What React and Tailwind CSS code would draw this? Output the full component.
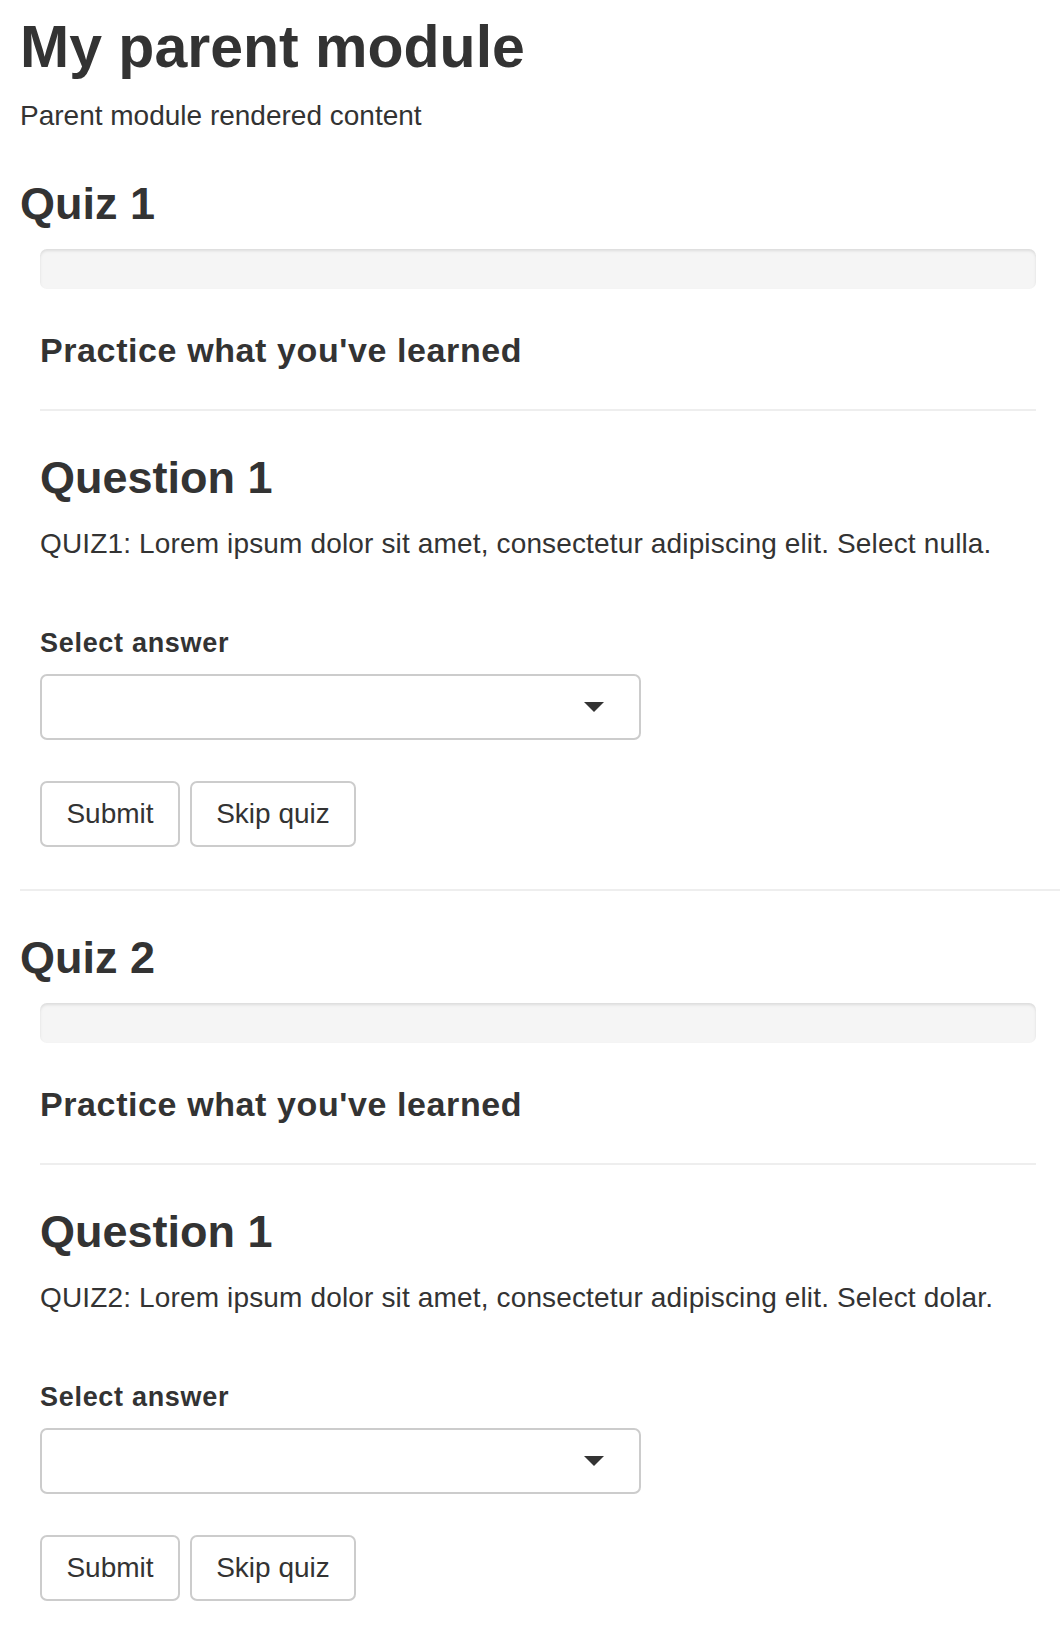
import React from "react";

function Quiz({ title, text, first }) {
  return (
    <section className={first ? "" : "border-t-2 border-[#eeeeee]"}>
      <h2 className={`${first ? "mt-[43px] mb-[1px]" : "mt-[42px] mb-[2px]"} text-[45px] leading-[50px] font-bold`}>{title}</h2>
      <div className="pl-[20px] pr-[24px]">
        <div className="mt-[20px] h-[40px] rounded-[7px] bg-[#f5f5f5] shadow-[inset_0_2px_3px_rgba(0,0,0,0.1)]" />
        <h4 className="mt-[41px] text-[34px] leading-[40px] font-bold tracking-[0.6px]">Practice what you've learned</h4>
        <hr className="mt-[39px] border-0 border-t-2 border-[#eeeeee]" />
        <h2 className="mt-[42px] text-[45px] leading-[50px] font-bold">Question 1</h2>
        <p className="mt-[21px] text-[28px] leading-[40px] tracking-[0.15px]">{text}</p>
        <label className="block mt-[63px] text-[27px] leading-[32px] font-bold tracking-[0.7px]">Select answer</label>
        <div className="mt-[15px] w-[601px] h-[66px] border-2 border-[#cccccc] rounded-[7px] bg-white flex items-center justify-end pr-[35px]">
          <svg width="20" height="10" viewBox="0 0 20 10" aria-hidden="true">
            <polygon points="0,0 20,0 10,10" fill="#333333" />
          </svg>
        </div>
        <div className="mt-[41px] mb-[42px] flex gap-[10px]">
          <button className="h-[66px] w-[140px] border-2 border-[#cccccc] rounded-[7px] bg-white text-[28px] text-[#333333]">Submit</button>
          <button className="h-[66px] w-[166px] border-2 border-[#cccccc] rounded-[7px] bg-white text-[28px] text-[#333333]">Skip quiz</button>
        </div>
      </div>
    </section>
  );
}

export default function App() {
  return (
    <div className="min-h-[1652px] bg-white pl-[20px] text-[#333333] font-['Liberation_Sans',Arial,sans-serif]">
      <h1 className="pt-[14px] text-[59px] leading-[66px] font-bold">My parent module</h1>
      <p className="mt-[16px] text-[28px] leading-[40px]">Parent module rendered content</p>
      <Quiz first title="Quiz 1" text="QUIZ1: Lorem ipsum dolor sit amet, consectetur adipiscing elit. Select nulla." />
      <Quiz title="Quiz 2" text="QUIZ2: Lorem ipsum dolor sit amet, consectetur adipiscing elit. Select dolar." />
    </div>
  );
}
